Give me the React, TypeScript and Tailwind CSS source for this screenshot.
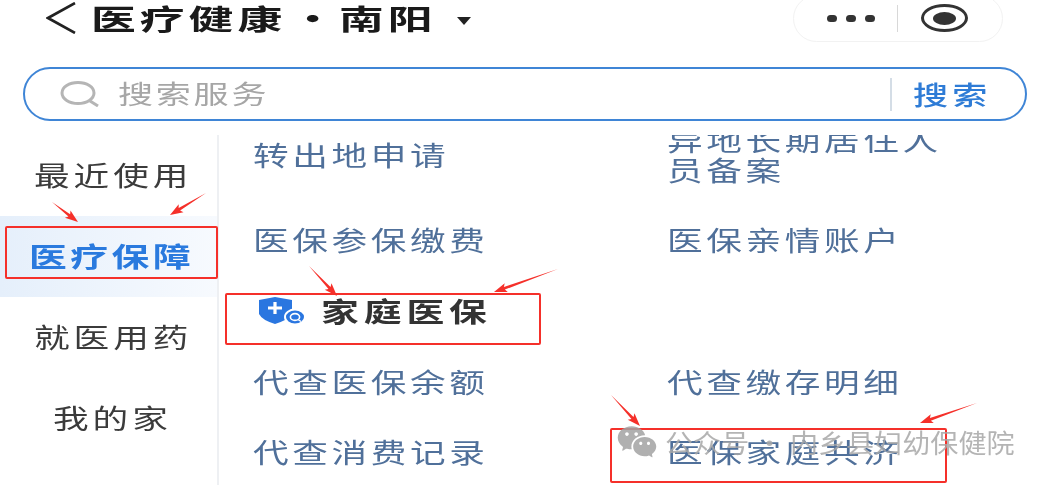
import React from 'react';
import { RiWechatFill } from 'react-icons/ri';

const font = { fontFamily: '"Noto Sans CJK SC", "Noto Sans", sans-serif' };

const arrows = [
  [52, 202, 78, 222],
  [206, 193, 170, 215],
  [309, 266, 337, 296],
  [558, 269, 494, 292],
  [611, 395, 640, 426],
  [977, 403, 920, 423],
];

// tapered red arrow, thin tail to a small head
const Arrow: React.FC<{ a: number[] }> = ({ a }) => {
  const [x1, y1, x2, y2] = a;
  const len = Math.hypot(x2 - x1, y2 - y1);
  const ux = (x2 - x1) / len;
  const uy = (y2 - y1) / len;
  const at = (back: number, side: number) =>
    `${x2 - ux * back - uy * side},${y2 - uy * back + ux * side}`;
  const points = [
    `${x1},${y1}`,
    at(11, 1.4),
    at(13, 4.6),
    at(0, 0),
    at(13, -4.6),
    at(11, -1.4),
  ].join(' ');
  return <polygon points={points} fill="#f5302a" />;
};

const ShieldIcon: React.FC = () => (
  <svg width="50" height="28" viewBox="0 0 50 28">
    <path d="M1 3 L17 0 L34 3 L34 17 Q30 23 17 27 Q4 23 1 17 Z" fill="#2a76e0" />
    <path d="M17 5 V17 M10 11 H24" stroke="#fff" strokeWidth="3.2" fill="none" />
    <ellipse cx="37" cy="20" rx="10" ry="7.5" fill="#2a76e0" stroke="#fff" strokeWidth="2" />
    <ellipse cx="37" cy="20" rx="4.6" ry="3.4" fill="none" stroke="#fff" strokeWidth="1.6" />
    <path d="M40 22.5 L43 24.5" stroke="#fff" strokeWidth="1.4" />
  </svg>
);

const Item: React.FC<{ children: React.ReactNode }> = ({ children }) => (
  <span className="inline-block origin-left scale-x-[1.32] text-[27px] leading-[30px] tracking-[2.75px] text-[#50709a] whitespace-nowrap">
    {children}
  </span>
);

const NavItem: React.FC<{ label: string; active?: boolean; short?: boolean }> = ({ label, active, short }) => (
  <div
    className={
      active
        ? 'flex h-[81px] items-center bg-gradient-to-r from-[#e5effb] to-[#f7fafe] pl-[29px]'
        : short
          ? 'flex h-[81px] items-center pl-[53px]'
          : 'flex h-[81px] items-center pl-[34px]'
    }
  >
    <span
      className={
        active
          ? 'inline-block origin-left scale-x-[1.4] text-[27px] font-bold tracking-[2.5px] text-[#2a7ade]'
          : 'inline-block origin-left scale-x-[1.32] text-[27px] tracking-[3px] text-[#3b3b3b]'
      }
    >
      {label}
    </span>
  </div>
);

export default function App() {
  return (
    <div className="relative h-[485px] w-[1047px] overflow-hidden bg-white blur-[0.4px]" style={font}>
      {/* Header */}
      <div className="flex h-[36px] items-center pl-[46px] pr-[44px]">
        <svg width="30" height="32" viewBox="0 0 30 32" className="shrink-0">
          <path d="M29 1 L2 16 L29 31" fill="none" stroke="#222" strokeWidth="2.6" />
        </svg>
        <div className="ml-[15px] flex w-[345px] origin-left scale-x-[1.6] text-[28px] font-bold leading-[36px] tracking-[2.5px] text-[#1a1a1a]">
          <span className="shrink-0 whitespace-nowrap">医疗健康</span>
          <span className="w-[33px] shrink-0 text-center tracking-normal">·</span>
          <span className="shrink-0 whitespace-nowrap">南阳</span>
        </div>
        <div className="ml-[21px] mt-[5px] h-0 w-0 shrink-0 border-x-[7px] border-t-[8px] border-x-transparent border-t-[#222]" />
        <div className="ml-auto flex h-[47px] w-[210px] shrink-0 items-center rounded-full border border-[#f2f2f2] pl-[33px]">
          <div className="flex gap-[9px]">
            <span className="h-[7px] w-[10px] rounded-full bg-[#333]" />
            <span className="h-[7px] w-[10px] rounded-full bg-[#333]" />
            <span className="h-[7px] w-[10px] rounded-full bg-[#333]" />
          </div>
          <div className="ml-[22px] h-[27px] w-px bg-[#d8d8d8]" />
          <div className="ml-[23px] flex h-[28px] w-[47px] items-center justify-center rounded-[50%] border-[3.5px] border-[#333]">
            <span className="h-[13px] w-[23px] rounded-[50%] bg-[#333]" />
          </div>
        </div>
      </div>

      {/* Search */}
      <div className="ml-[23px] mr-[20px] mt-[31px] flex h-[54px] items-center rounded-full border-2 border-[#3f85d6] pl-[35px]">
        <svg width="40" height="26" viewBox="0 0 40 26" className="shrink-0">
          <ellipse cx="18" cy="12" rx="16" ry="10.5" fill="none" stroke="#b5b5b5" strokeWidth="3" />
          <path d="M30 20 L38 25" stroke="#b5b5b5" strokeWidth="3" />
        </svg>
        <span className="mb-[4px] ml-[18px] inline-block origin-left scale-x-[1.35] text-[26px] tracking-[2px] text-[#a6a6a6]">
          搜索服务
        </span>
        <div className="ml-auto h-[33px] w-[2px] bg-[#d4dde6]" />
        <span className="mb-[2px] ml-[21px] mr-[37px] inline-block w-[75px] origin-left scale-x-[1.35] whitespace-nowrap text-[26px] font-medium tracking-[3px] text-[#2f7cd6]">
          搜索
        </span>
      </div>

      {/* Body */}
      <div className="mt-[14px] flex h-[350px]">
        <div className="w-[219px] shrink-0 border-r-2 border-[#eef0f3]">
          <NavItem label="最近使用" />
          <NavItem label="医疗保障" active />
          <NavItem label="就医用药" />
          <NavItem label="我的家" short />
        </div>
        <div className="min-w-0 flex-1 overflow-hidden">
          <div className="-mt-[20px] grid grid-cols-[414px_1fr] grid-rows-[80px_90px_52px_90px_50px] items-center pl-[34px]">
            <div><Item>转出地申请</Item></div>
            <div className="flex flex-col items-start">
              <Item>异地长期居住人</Item>
              <Item>员备案</Item>
            </div>
            <div><Item>医保参保缴费</Item></div>
            <div><Item>医保亲情账户</Item></div>
            <div className="col-span-2 flex items-center gap-[13px] pl-[5px]">
              <ShieldIcon />
              <span className="inline-block origin-left scale-x-[1.4] text-[27px] font-bold tracking-[3.5px] text-[#333]">
                家庭医保
              </span>
            </div>
            <div><Item>代查医保余额</Item></div>
            <div><Item>代查缴存明细</Item></div>
            <div><Item>代查消费记录</Item></div>
            <div><Item>医保家庭共济</Item></div>
          </div>
        </div>
      </div>

      {/* Red annotations over the page */}
      <div className="absolute left-[5px] top-[226px] h-[53px] w-[213px] rounded-[2px] border-2 border-[#f5302a]" />
      <div className="absolute left-[225px] top-[293px] h-[52px] w-[316px] rounded-[2px] border-2 border-[#f5302a]" />
      <div className="absolute left-[610px] top-[428px] h-[55px] w-[337px] rounded-[2px] border-2 border-[#f5302a]" />
      <svg className="absolute left-0 top-0" width="1047" height="485" viewBox="0 0 1047 485">
        {arrows.map((a, i) => (
          <Arrow key={i} a={a} />
        ))}
      </svg>

      {/* Watermark */}
      <div className="absolute left-[616px] top-[421px] flex items-center text-[#a3a3a3] opacity-85">
        <RiWechatFill size={42} />
        <span className="ml-[7px] inline-block origin-left scale-x-[1.08] whitespace-nowrap text-[26px] leading-[36px] text-[#a8a8a8]">
          公众号 · 内乡县妇幼保健院
        </span>
      </div>
    </div>
  );
}
